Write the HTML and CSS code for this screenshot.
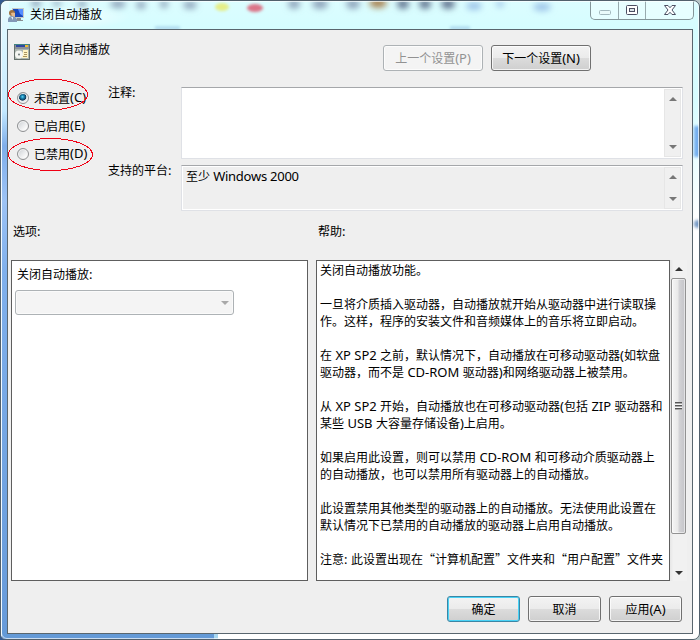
FILE: index.html
```
<!DOCTYPE html>
<html lang="zh-CN">
<head>
<meta charset="utf-8">
<title>关闭自动播放</title>
<link rel="stylesheet" href="styles.css">
</head>
<body>
<div class="window">
  <div class="glass">
    <svg width="698" height="638" viewBox="1 1 698 638">
      <defs>
        <filter id="soft" x="-50%" y="-50%" width="200%" height="200%"><feGaussianBlur stdDeviation="3"/></filter>
        <filter id="edge" x="-50%" y="-50%" width="200%" height="200%"><feGaussianBlur stdDeviation="1.8"/></filter>
      </defs>
      <g filter="url(#soft)">
        <g fill="#8fa4bb">
          <ellipse cx="36" cy="3" rx="5" ry="4"/><ellipse cx="57" cy="3" rx="4" ry="3"/><ellipse cx="82" cy="4" rx="4" ry="4"/>
          <ellipse cx="118" cy="4" rx="8" ry="4"/><ellipse cx="141" cy="5" rx="5" ry="4"/><ellipse cx="164" cy="4" rx="4" ry="4"/><ellipse cx="190" cy="5" rx="7" ry="4"/>
          <ellipse cx="294" cy="4" rx="6" ry="5"/><ellipse cx="320" cy="4" rx="8" ry="5"/><ellipse cx="353" cy="4" rx="7" ry="5"/>
        </g>
        <g fill="#62748f"><ellipse cx="403" cy="4" rx="6" ry="5"/><ellipse cx="425" cy="4" rx="6" ry="5"/><ellipse cx="448" cy="4" rx="7" ry="5"/></g>
        <g fill="#9cc3e8"><ellipse cx="474" cy="6" rx="8" ry="4"/><ellipse cx="500" cy="4" rx="4" ry="3"/><ellipse cx="542" cy="7" rx="9" ry="4"/></g>
        <ellipse cx="378" cy="3" rx="9" ry="5" fill="#a88453"/>
      </g>
      <g filter="url(#edge)">
        <ellipse cx="222" cy="7" rx="7" ry="4" fill="#e5ee86"/>
        <ellipse cx="255" cy="8" rx="8" ry="4" fill="#dc7387"/>
        <rect x="694" y="126" width="8" height="31" fill="#75aeee"/>
        <circle cx="698" cy="224" r="4" fill="#789bc6"/>
        <path d="M155 28h25M450 28h20" stroke="#a9d5ed" stroke-width="3"/>
      </g>
      <rect x="2" y="630" width="212" height="9" fill="#649ad7"/>
      <rect x="214" y="630" width="4" height="9" fill="#a9d7f0"/>
    </svg>
  </div>

  <header class="titlebar">
    <svg class="app-icon" width="17" height="17" viewBox="0 0 17 17">
      <rect x="4.5" y="1.5" width="11" height="9" fill="#1749bd" stroke="#c8cbc5"/>
      <path d="M10 2h5v7l-3-2z" fill="#548dff"/>
      <path d="M9 11h4v2h2v1H8z" fill="#888f92"/>
      <circle cx="4" cy="6" r="3" fill="#9d7140"/>
      <path d="M3 6q2-1 4 0v4H4z" fill="#e6bb8d"/>
      <path d="M0 15v-3q1-3 4-3t5 3v3z" fill="#8399b7"/><path d="M3 10h2v3z" fill="#e4edf4"/>
    </svg>
    <h1>关闭自动播放</h1>
    <div class="controls">
      <span class="min"><svg width="12" height="5"><rect x=".5" y=".5" width="11" height="4" rx="1" fill="#e9fafa" stroke="#a2b8bd"/></svg></span>
      <span class="max"><svg width="12" height="10"><rect x=".5" y=".5" width="11" height="9" rx="1" fill="#fff" stroke="#4b4f62"/><rect x="3.5" y="3.5" width="5" height="3" fill="#dbe5e9" stroke="#4b4f62"/></svg></span>
      <span class="close"><svg width="12" height="10" viewBox="0 0 12 10"><path d="M.5.5H4L6 2.700 8 .5h3.500L8 5l3.500 4.500H8L6 7.300 4 9.500H.5L4 5z" fill="#fff" stroke="#4b4f62" stroke-linejoin="round"/></svg></span>
    </div>
  </header>

  <main class="client">
    <section class="heading">
      <svg width="16" height="16" viewBox="0 0 16 16">
        <rect width="16" height="16" fill="#65706b"/><path d="M0 0h16v1H0z" fill="#3f8583"/><path d="M1 1h14v4H1z" fill="#8b9199"/><path d="M2 1h9v2H2z" fill="#2f47a0"/><path d="M11 1h3v2h-3z" fill="#efbc32"/>
        <path d="M1 5h14v10H1z" fill="#aab4ae"/><circle cx="5" cy="10.500" r="4" fill="#f5f6f2"/><circle cx="5" cy="10.500" r="1" fill="#6b7775"/>
        <path d="M9 6h5v8H8v-2h1z" fill="#fff4c4"/><path d="M10 8.500h3M10 10.500h3M9 12.500h4" stroke="#a89461"/>
      </svg>
      <h2>关闭自动播放</h2>
      <div class="nav">
        <button class="btn" disabled>上一个设置<i>(P)</i></button>
        <button class="btn">下一个设置<i>(N)</i></button>
      </div>
    </section>

    <section class="state">
      <div class="radios">
        <div class="choice"><span class="radio on"></span>未配置<i>(C)</i></div>
        <div class="choice"><span class="radio"></span>已启用<i>(E)</i></div>
        <div class="choice"><span class="radio"></span>已禁用<i>(D)</i></div>
      </div>
      <div class="label">注释<i>:</i></div>
      <div class="field comment"><div class="value"></div><div class="mini-scroll"><b class="up"></b><b class="down"></b></div></div>
      <div class="label">支持的平台<i>:</i></div>
      <div class="field supported"><div class="value">至少<i class="product"> Windows 2000</i></div><div class="mini-scroll"><b class="up"></b><b class="down"></b></div></div>
    </section>

    <section class="captions"><div>选项<i>:</i></div><div>帮助<i>:</i></div></section>

    <section class="panels">
      <div class="panel options">
        <div class="option-label">关闭自动播放<i>:</i></div>
        <div class="select"><b></b></div>
      </div>
      <div class="panel help">
        <p>关闭自动播放功能。</p>
        <p>一旦将介质插入驱动器，自动播放就开始从驱动器中进行读取操<br>作。这样，程序的安装文件和音频媒体上的音乐将立即启动。</p>
        <p>在<i> XP SP2 </i>之前，默认情况下，自动播放在可移动驱动器<i>(</i>如软盘<br>驱动器，而不是<i> CD-ROM </i>驱动器<i>)</i>和网络驱动器上被禁用。</p>
        <p>从<i> XP SP2 </i>开始，自动播放也在可移动驱动器<i>(</i>包括<i> ZIP </i>驱动器和<br>某些<i> USB </i>大容量存储设备<i>)</i>上启用。</p>
        <p>如果启用此设置，则可以禁用<i> CD-ROM </i>和可移动介质驱动器上<br>的自动播放，也可以禁用所有驱动器上的自动播放。</p>
        <p>此设置禁用其他类型的驱动器上的自动播放。无法使用此设置在<br>默认情况下已禁用的自动播放的驱动器上启用自动播放。</p>
        <p>注意<i>: </i>此设置出现在“计算机配置”文件夹和“用户配置”文件夹</p>
      </div>
      <div class="scroll"><b class="up"></b><div class="thumb"><span></span></div><b class="down"></b></div>
    </section>

    <footer class="actions">
      <button class="btn default">确定</button>
      <button class="btn">取消</button>
      <button class="btn">应用<i>(A)</i></button>
    </footer>
  </main>

  <svg class="marks" width="100" height="100" viewBox="0 0 100 100" shape-rendering="crispEdges">
    <ellipse cx="47" cy="19.500" rx="39.500" ry="15.500"/>
    <ellipse cx="49.500" cy="79.500" rx="42" ry="16"/>
  </svg>
</div>
</body>
</html>
```
FILE: styles.css
```
* { box-sizing: border-box; }
html, body { margin: 0; width: 700px; height: 640px; overflow: hidden; }
body { background: linear-gradient(90deg, #345a91, #b8c5c7); font: 12px/17px "Noto Sans CJK SC", sans-serif; color: #000; }
h1, h2, p { margin: 0; font: inherit; }
i { font: normal 13px/1 "Noto Sans", "Noto Sans CJK SC", sans-serif; white-space: pre; }
svg { display: block; flex: none; }

.window {
  position: relative; width: 700px; height: 640px; overflow: hidden;
  border: 1px solid #52606c; border-radius: 7px 7px 7px 6px;
  background: linear-gradient(#dcfdff, #d5fdff 28px, #d7fcff 100px, #fff 220px, #fff);
}
.window::before {
  content: ""; position: absolute; left: 0; top: 0; width: 7px; height: 638px;
  background: linear-gradient(#e8fcff, #c4e9ff 110px, #7faeea 145px, #9dc3f5 200px, #80b0ec 270px, #669ad9);
  border-left: 1px solid #d9f0ff;
}
.window::after {
  content: ""; position: absolute; inset: 0; pointer-events: none;
  border: 1px solid rgba(255,255,255,.65); border-radius: 6px;
}
.glass { position: absolute; inset: 0; }

.titlebar { position: relative; display: flex; height: 28px; padding-left: 7px; }
.titlebar .app-icon { margin-top: 6px; }
.titlebar h1 { width: 108px; margin: 4px 0 0 -3px; padding-left: 8px; background: radial-gradient(closest-side, rgba(255,255,255,.65), transparent); }
.controls { display: flex; width: 104px; height: 19px; margin: 0 5px 0 auto; border: 1px solid #84969a; border-top: 0; border-radius: 0 0 5px 5px; background: rgba(242,255,255,.55); }
.controls span { display: flex; align-items: center; justify-content: center; border-right: 1px solid #98aaae; }
.controls .min { width: 28px; padding-top: 5px; }
.controls .max { width: 27px; }
.controls .close { flex: 1; border: 0; }

.client { position: relative; width: 686px; height: 605px; margin-left: 6px; border: 1px solid #59666e; background: #efefef; }

.btn {
  height: 26px; width: 73px; padding: 0 0 2px; border: 1px solid #707070; border-radius: 3px;
  background: linear-gradient(#f3f3f3, #ebebeb 48%, #dcdcdc 50%, #cfcfcf);
  box-shadow: inset 0 0 0 1px rgba(255,255,255,.75); color: #000; font: inherit;
}
.btn:disabled { border-color: #adb2b5; background: #f4f4f4; color: #929292; }
.btn.default { border-color: #3b86a5; box-shadow: inset 0 0 0 1px #48d2f6; }

.heading { display: flex; height: 45px; padding: 14px 0 0 6px; }
.heading h2 { margin: -4px 0 0 8px; width: 100px; }
.nav { display: flex; gap: 8px; margin: 1px 0 0 245px; }
.nav .btn { width: 100px; }

.state { display: grid; grid-template-columns: 91px 73px 502px; grid-template-rows: 72px 46px; row-gap: 6px; height: 148px; padding: 12px 0 0 9px; }
.radios { grid-row: 1 / 3; display: flex; flex-direction: column; gap: 11px; padding-top: 2px; }
.choice { display: flex; align-items: center; height: 17px; white-space: nowrap; }
.choice i { line-height: 17px; }
.radio { width: 12px; height: 12px; margin-right: 5px; border: 1px solid #8e9092; border-radius: 50%; background: linear-gradient(135deg, #cbcfd3, #fafafa 75%); box-shadow: inset 0 0 0 1px #f4f4f4; }
.radio.on { background: radial-gradient(circle at 45% 38%, #63d4f5 0, #1683b0 20%, #113757 42%, #dce4e9 50%, #f7f7f7 70%); }
.label { margin-top: -4px; white-space: nowrap; }
.field { display: flex; border: 1px solid #dfe1e6; border-top-color: #a5a7aa; box-shadow: inset 0 0 0 1px #fff; padding: 1px; }
.comment { background: #fff; }
.value { flex: 1; padding: 0 0 0 3px; }
.product { letter-spacing: -.25px; }
.mini-scroll { width: 17px; padding: 7px 0; display: flex; flex-direction: column; justify-content: space-between; align-items: center; background: #f0f0f0; border: 1px solid #e6e6e6; }
.up, .down { width: 0; height: 0; border: 4px solid transparent; }
.up { border-top: 0; border-bottom-color: #777; }
.down { border-bottom: 0; border-top-color: #777; }

.captions { display: grid; grid-template-columns: 305px 1fr; height: 37px; margin-top: -1px; padding-left: 5px; }
.panels { display: flex; height: 321px; margin-top: 1px; padding-left: 3px; }
.panel { height: 321px; border: 1px solid #5e5e5e; background: #fff; }
.options { width: 297px; padding: 4px 3px; }
.option-label { height: 25px; padding-left: 2px; }
.select { display: flex; align-items: center; justify-content: flex-end; width: 219px; height: 25px; padding-right: 4px; border: 1px solid #adb2b5; border-radius: 3px; background: #f4f4f4; box-shadow: inset 0 0 0 1px #fafafa; }
.select b { border: 4px solid transparent; border-top-color: #a8a8a8; border-bottom: 0; }
.help { width: 354px; margin-left: 8px; padding: 0 0 0 3px; overflow: hidden; white-space: nowrap; }
.help p + p { margin-top: 17px; }
.scroll { display: flex; flex-direction: column; align-items: center; width: 17px; height: 321px; padding: 7px 0 6px; background: linear-gradient(90deg, #e6e6e6, #f1f1f1 20%, #f1f1f1); }
.scroll .up { border-bottom-color: #333; }
.scroll .down { border-top-color: #333; margin-top: auto; }
.thumb { display: flex; align-items: center; justify-content: center; width: 15px; height: 256px; margin-top: 7px; border: 1px solid #929292; border-radius: 2px; background: linear-gradient(90deg, #f5f5f5, #e9e9e9 45%, #d3d3d6 55%, #c4c4c8); box-shadow: inset 0 0 0 1px rgba(255,255,255,.5); }
.thumb span { width: 7px; height: 8px; background: repeating-linear-gradient(#555 0 1px, #aaa 1px 2px, #f7f7f7 2px 3px); }
.actions { display: flex; gap: 8px; padding: 15px 0 0 439px; }

.marks { position: absolute; left: 0; top: 74px; fill: none; stroke: #f00014; stroke-width: 1; }
```
